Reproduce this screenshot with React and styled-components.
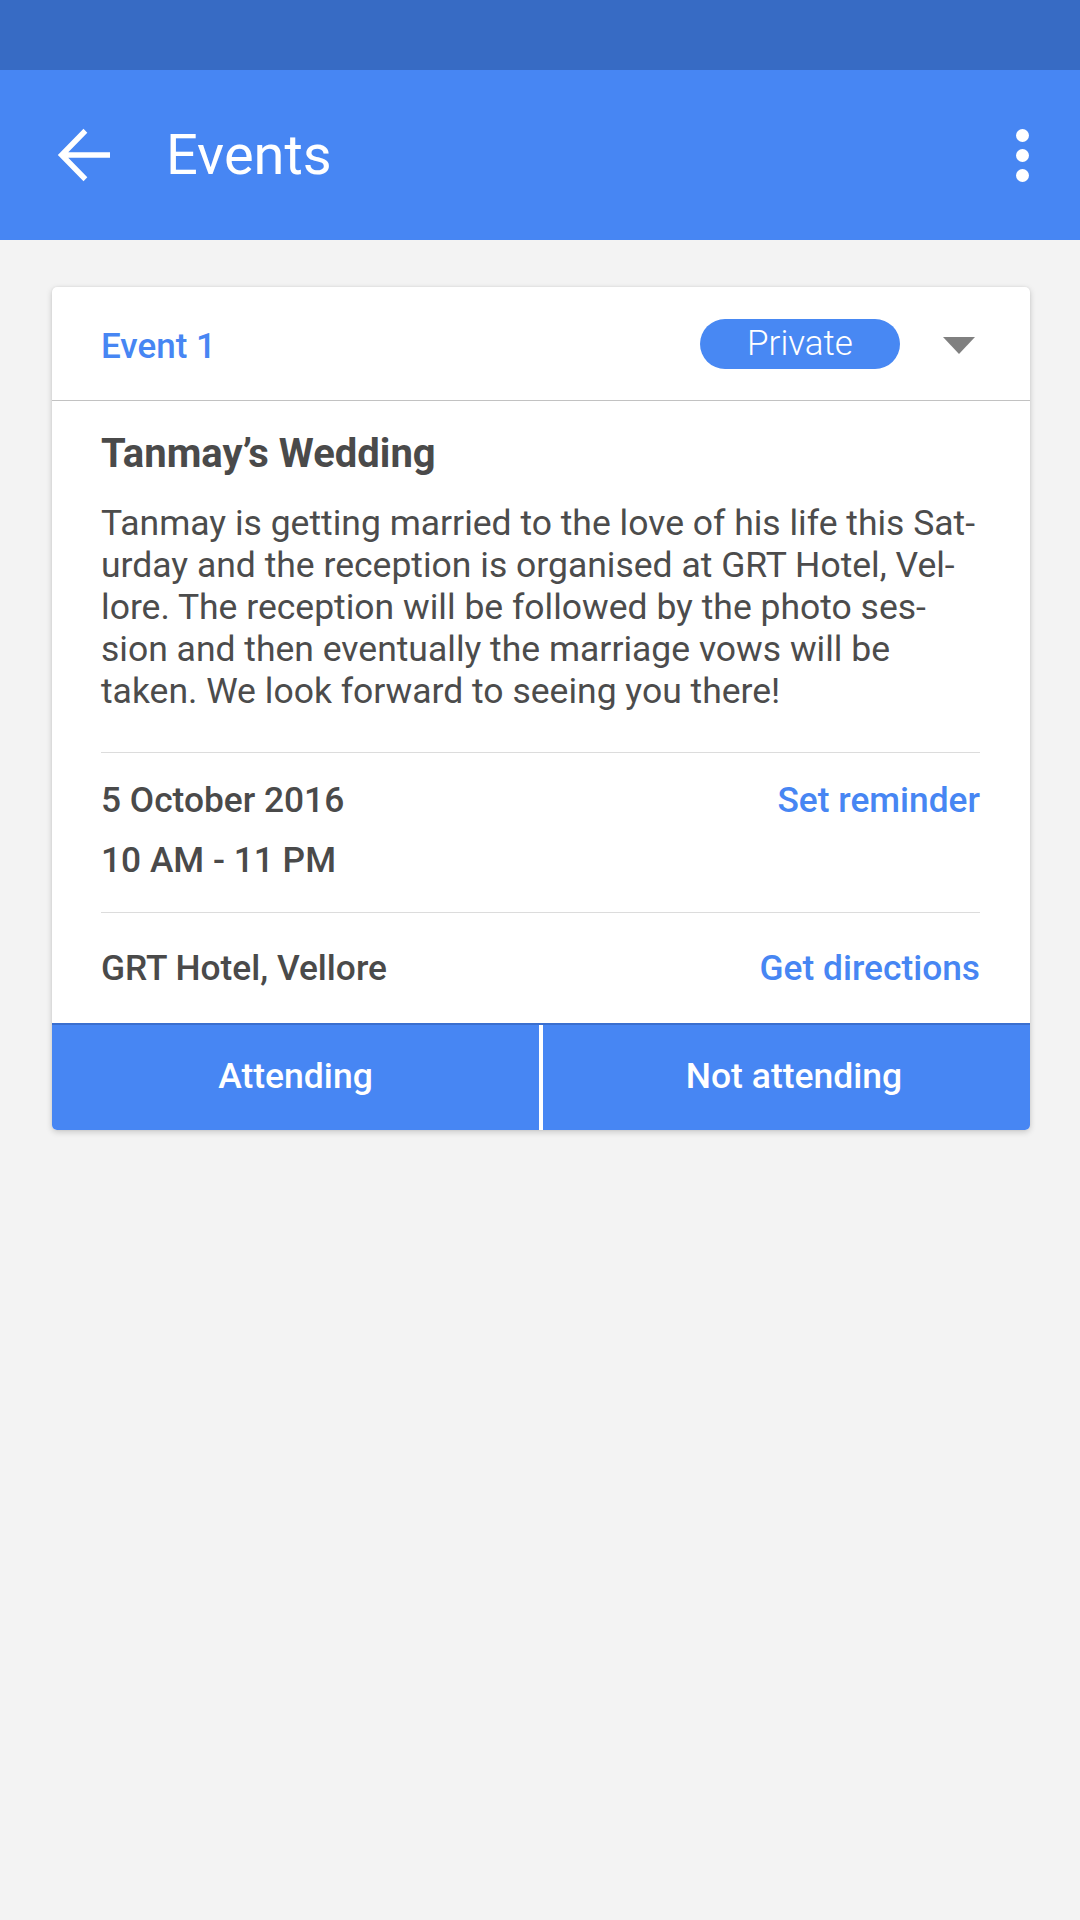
import React from "react";
import styled, { createGlobalStyle } from "styled-components";

const Global = createGlobalStyle`
  html, body { margin: 0; padding: 0; background: #f3f3f3; }
  body { font-family: Roboto, "Noto Sans", Arial, sans-serif; -webkit-font-smoothing: antialiased; }
  * { box-sizing: border-box; }
`;

const Screen = styled.div`
  width: 1080px;
  min-height: 1920px;
  background: #f3f3f3;
  display: flex;
  flex-direction: column;
`;

const StatusBar = styled.div`
  height: 70px;
  background: #376bc4;
`;

const AppBar = styled.header`
  height: 170px;
  background: #4786f3;
  display: flex;
  align-items: center;
  padding: 0 0 0 57px;
`;

const BackButton = styled.div`
  width: 53px;
  height: 54px;
  display: flex;
  align-items: center;
  justify-content: center;
`;

const Title = styled.h1`
  margin: 0 0 0 56px;
  font-family: Roboto, sans-serif;
  font-weight: 400;
  font-size: 56px;
  color: #fff;
  flex: 1;
  line-height: 1;
`;

const MoreButton = styled.div`
  width: 13px;
  display: flex;
  flex-direction: column;
  gap: 7px;
  margin-right: 51px;
`;

const Dot = styled.span`
  width: 13px;
  height: 13px;
  border-radius: 50%;
  background: #fff;
`;

const Content = styled.main`
  padding: 47px 50px 0 52px;
`;

const Card = styled.section`
  background: #fff;
  border-radius: 5px;
  box-shadow: 0 2px 6px rgba(0, 0, 0, 0.18), 0 0 2px rgba(0, 0, 0, 0.08);
  overflow: hidden;
`;

const CardHeader = styled.div`
  height: 114px;
  display: flex;
  align-items: center;
  padding: 0 55px 0 49px;
  border-bottom: 1px solid #c2c2c2;
`;

const EventLabel = styled.div`
  flex: 1;
  font-size: 35px;
  font-weight: 500;
  color: #4786f3;
  padding-top: 5px;
`;

const Pill = styled.div`
  width: 200px;
  height: 50px;
  border-radius: 25px;
  background: #4888f3;
  color: #fff;
  font-size: 35px;
  font-weight: 300;
  display: flex;
  align-items: center;
  justify-content: center;
  margin-right: 43px;
`;

const Caret = styled.div`
  width: 0;
  height: 0;
  border-left: 16.5px solid transparent;
  border-right: 16.5px solid transparent;
  border-top: 17px solid #808080;
  margin-top: 3px;
`;

const Body = styled.div`
  padding: 0 50px 0 49px;
`;

const EventTitle = styled.h2`
  margin: 0;
  padding-top: 29px;
  font-size: 40px;
  line-height: 48px;
  font-weight: 700;
  color: #4a4a4a;
`;

const Description = styled.p`
  margin: 24px 0 0;
  font-size: 35.5px;
  line-height: 42px;
  font-weight: 400;
  color: #4c4c4c;
  padding-bottom: 40px;
  border-bottom: 1px solid #dcdcdc;
  white-space: nowrap;
`;

const InfoBlock = styled.div`
  padding: ${(p) => p.$pad};
  border-bottom: ${(p) => (p.$divider ? "1px solid #dcdcdc" : "none")};
  display: flex;
  flex-direction: column;
  gap: 12px;
`;

const InfoRow = styled.div`
  display: flex;
  justify-content: space-between;
  align-items: baseline;
  height: 48px;
  line-height: 48px;
`;

const InfoText = styled.span`
  font-size: 35.3px;
  font-weight: 500;
  color: #4a4a4a;
`;

const LinkText = styled.span`
  font-size: 35.3px;
  font-weight: 500;
  color: #4786f3;
`;

const Actions = styled.div`
  display: grid;
  grid-template-columns: 1fr 1fr;
  column-gap: 4px;
  background: #fff;
  border-top: 2px solid #3a6fcf;
`;

const ActionButton = styled.button`
  height: 105px;
  border: none;
  background: #4786f3;
  color: #fff;
  font-family: Roboto, sans-serif;
  font-size: 35.5px;
  font-weight: 500;
  padding: 0 0 3px ${(p) => (p.$shift ? `${p.$shift}px` : "0")};
  cursor: pointer;
`;

function ArrowBack() {
  return (
    <svg width="53" height="54" viewBox="4 4 16 16" preserveAspectRatio="none" aria-hidden="true">
      <path
        fill="#fff"
        d="M20 11.15H7.4l5.75-5.75L12 4.25 4.25 12 12 19.75l1.15-1.15-5.75-5.75H20v-1.7z"
      />
    </svg>
  );
}

export default function App() {
  return (
    <>
      <Global />
      <Screen>
        <StatusBar />
        <AppBar>
          <BackButton>
            <ArrowBack />
          </BackButton>
          <Title>Events</Title>
          <MoreButton>
            <Dot />
            <Dot />
            <Dot />
          </MoreButton>
        </AppBar>
        <Content>
          <Card>
            <CardHeader>
              <EventLabel>Event 1</EventLabel>
              <Pill>Private</Pill>
              <Caret />
            </CardHeader>
            <Body>
              <EventTitle>Tanmay’s Wedding</EventTitle>
              <Description>
                Tanmay is getting married to the love of his life this Sat-
                <br />
                urday and the reception is organised at GRT Hotel, Vel-
                <br />
                lore. The reception will be followed by the photo ses-
                <br />
                sion and then eventually the marriage vows will be
                <br />
                taken. We look forward to seeing you there!
              </Description>
              <InfoBlock $pad="23px 0 28px" $divider>
                <InfoRow>
                  <InfoText>5 October 2016</InfoText>
                  <LinkText>Set reminder</LinkText>
                </InfoRow>
                <InfoRow>
                  <InfoText>10 AM - 11 PM</InfoText>
                </InfoRow>
              </InfoBlock>
              <InfoBlock $pad="31px 0 31px">
                <InfoRow>
                  <InfoText>GRT Hotel, Vellore</InfoText>
                  <LinkText>Get directions</LinkText>
                </InfoRow>
              </InfoBlock>
            </Body>
            <Actions>
              <ActionButton>Attending</ActionButton>
              <ActionButton $shift={15}>Not attending</ActionButton>
            </Actions>
          </Card>
        </Content>
      </Screen>
    </>
  );
}
